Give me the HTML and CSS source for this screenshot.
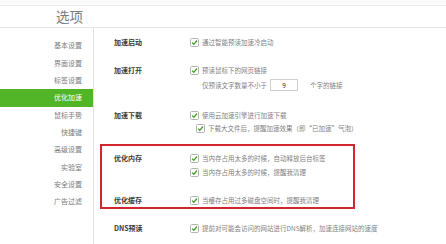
FILE: index.html
```html
<!DOCTYPE html>
<html lang="zh-CN">
<head>
<meta charset="utf-8">
<title>选项</title>
<link rel="stylesheet" href="styles.css">
</head>
<body>
<div class="topbar"></div>
<header class="header"><div class="title">选项</div></header>
<div class="layout">
  <nav class="sidebar">
    <div class="nav-item">基本设置</div>
    <div class="nav-item">界面设置</div>
    <div class="nav-item">标签设置</div>
    <div class="nav-item active">优化加速</div>
    <div class="nav-item">鼠标手势</div>
    <div class="nav-item">快捷键</div>
    <div class="nav-item">高级设置</div>
    <div class="nav-item">实验室</div>
    <div class="nav-item">安全设置</div>
    <div class="nav-item">广告过滤</div>
  </nav>
  <main class="main">
    <section class="row r1">
      <div class="label">加速启动</div>
      <div class="opts">
        <div class="line"><svg class="cb" viewBox="0 0 9 9"><rect x="0.5" y="0.5" width="8" height="8" rx="1" fill="#fff" stroke="#b3b3b3"/><path d="M2.1 4.6 L3.8 6.3 L7 2.5" fill="none" stroke="#3f9b22" stroke-width="1.3"/></svg><span>通过智能预读加速冷启动</span></div>
      </div>
    </section>
    <section class="row r2">
      <div class="label">加速打开</div>
      <div class="opts">
        <div class="line"><svg class="cb" viewBox="0 0 9 9"><rect x="0.5" y="0.5" width="8" height="8" rx="1" fill="#fff" stroke="#b3b3b3"/><path d="M2.1 4.6 L3.8 6.3 L7 2.5" fill="none" stroke="#3f9b22" stroke-width="1.3"/></svg><span>预读鼠标下的网页链接</span></div>
        <div class="line sub plain"><span>仅预读文字数量不小于</span><span class="num">9</span><span>个字的链接</span></div>
      </div>
    </section>
    <section class="row r3">
      <div class="label">加速下载</div>
      <div class="opts">
        <div class="line"><svg class="cb" viewBox="0 0 9 9"><rect x="0.5" y="0.5" width="8" height="8" rx="1" fill="#fff" stroke="#b3b3b3"/><path d="M2.1 4.6 L3.8 6.3 L7 2.5" fill="none" stroke="#3f9b22" stroke-width="1.3"/></svg><span>使用云加速引擎进行加速下载</span></div>
        <div class="line indent"><svg class="cb" viewBox="0 0 9 9"><rect x="0.5" y="0.5" width="8" height="8" rx="1" fill="#fff" stroke="#b3b3b3"/><path d="M2.1 4.6 L3.8 6.3 L7 2.5" fill="none" stroke="#3f9b22" stroke-width="1.3"/></svg><span>下载大文件后，提醒加速效果（即“已加速”气泡）</span></div>
      </div>
    </section>
    <div class="highlight">
      <section class="row ra">
        <div class="label">优化内存</div>
        <div class="opts">
          <div class="line"><svg class="cb" viewBox="0 0 9 9"><rect x="0.5" y="0.5" width="8" height="8" rx="1" fill="#fff" stroke="#b3b3b3"/><path d="M2.1 4.6 L3.8 6.3 L7 2.5" fill="none" stroke="#3f9b22" stroke-width="1.3"/></svg><span>当内存占用太多的时候，自动释放后台标签</span></div>
          <div class="line sub"><svg class="cb" viewBox="0 0 9 9"><rect x="0.5" y="0.5" width="8" height="8" rx="1" fill="#fff" stroke="#b3b3b3"/><path d="M2.1 4.6 L3.8 6.3 L7 2.5" fill="none" stroke="#3f9b22" stroke-width="1.3"/></svg><span>当内存占用太多的时候，提醒我清理</span></div>
        </div>
      </section>
      <section class="row rb">
        <div class="label">优化缓存</div>
        <div class="opts">
          <div class="line"><svg class="cb" viewBox="0 0 9 9"><rect x="0.5" y="0.5" width="8" height="8" rx="1" fill="#fff" stroke="#b3b3b3"/><path d="M2.1 4.6 L3.8 6.3 L7 2.5" fill="none" stroke="#3f9b22" stroke-width="1.3"/></svg><span>当缓存占用过多磁盘空间时，提醒我清理</span></div>
        </div>
      </section>
    </div>
    <section class="row r4">
      <div class="label">DNS预读</div>
      <div class="opts">
        <div class="line"><svg class="cb" viewBox="0 0 9 9"><rect x="0.5" y="0.5" width="8" height="8" rx="1" fill="#fff" stroke="#b3b3b3"/><path d="M2.1 4.6 L3.8 6.3 L7 2.5" fill="none" stroke="#3f9b22" stroke-width="1.3"/></svg><span>提前对可能会访问的网站进行DNS解析，加速连接网站的速度</span></div>
      </div>
    </section>
  </main>
</div>
</body>
</html>
```

FILE: styles.css
```css
* { box-sizing: border-box; }
html, body { margin: 0; padding: 0; background: #fff; }
body {
  width: 446px;
  height: 244px;
  overflow: hidden;
  font-family: "Noto Sans CJK SC", "Noto Sans", sans-serif;
  color: #666;
}
.topbar {
  height: 6px;
  background: #fbfbfb;
  border-bottom: 1px solid #ececec;
}
.header {
  height: 22px;
  border-bottom: 1px solid #e4e4e4;
}
.title {
  width: 93px;
  padding-right: 10px;
  text-align: right;
  font-size: 13.5px;
  line-height: 21px;
  color: #7a7a7a;
  font-weight: 400;
}
.layout {
  display: flex;
  height: 216px;
}
.sidebar {
  width: 94px;
  flex: none;
  border-right: 1px solid #e3e3e3;
  padding-top: 9.3px;
  background: #fff;
}
.nav-item {
  height: 17.33px;
  line-height: 17.33px;
  padding-right: 11px;
  text-align: right;
  font-size: 7px;
  color: #7c7c7c;
}
.nav-item.active {
  background: #52b527;
  color: #fff;
}
.main {
  flex: 1;
  padding-left: 6px;
  padding-top: 7.5px;
}
.row {
  display: flex;
  padding-left: 14px;
}
.label {
  width: 76px;
  flex: none;
  font-size: 7px;
  font-weight: 700;
  line-height: 13px;
  color: #3a3a3a;
}
.opts {
  display: flex;
  flex-direction: column;
}
.line {
  display: flex;
  align-items: center;
  height: 13px;
  font-size: 6.5px;
  color: #7f7f7f;
  white-space: nowrap;
}
.line.sub { margin-top: 1px; }
.line.plain { padding-left: 12px; height: 14px; }
.line.indent { padding-left: 6px; }
.cb {
  width: 9px;
  height: 9px;
  flex: none;
  margin-right: 3px;
}
.num {
  width: 28px;
  height: 12px;
  margin: 0 12px 0 3px;
  border: 1px solid #cfcfcf;
  text-align: center;
  line-height: 10px;
  font-size: 6.5px;
  color: #333;
  background: #fff;
}
.r2 { margin-top: 15px; }
.r3 { margin-top: 17px; }
.highlight {
  margin-top: 9.5px;
  width: 255px;
  border: 2px solid #d4242f;
  padding-top: 5.5px;
}
.highlight .row { padding-left: 12px; }
.rb { margin-top: 15px; }
.r4 { margin-top: 13px; }
```
